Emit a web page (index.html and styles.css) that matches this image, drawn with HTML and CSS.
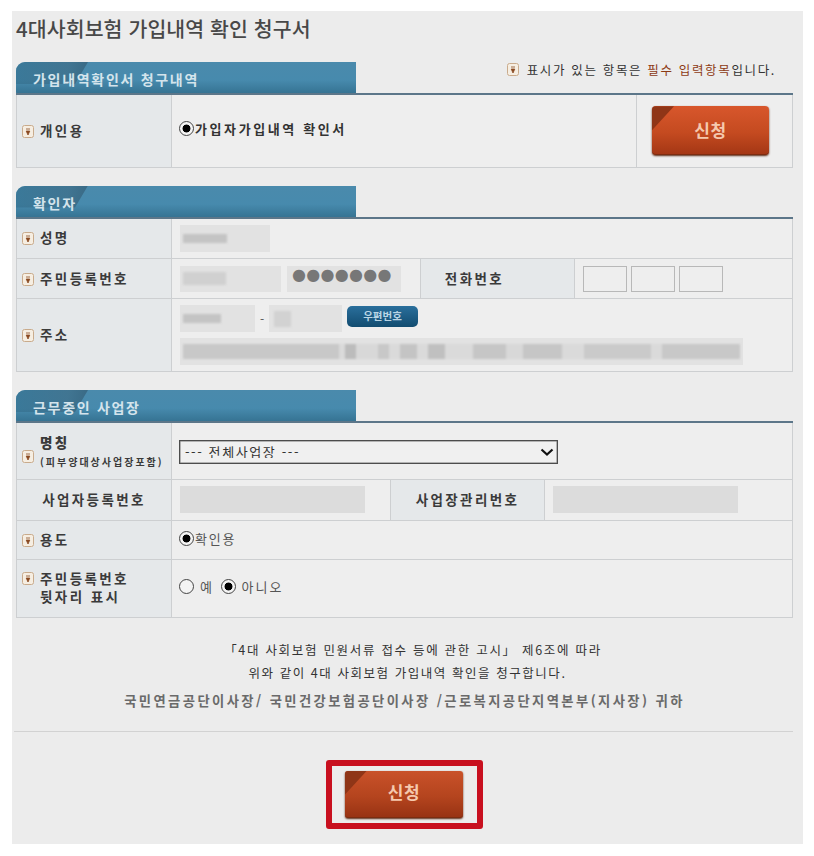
FILE: index.html
```html
<!DOCTYPE html>
<html lang="ko">
<head>
<meta charset="utf-8">
<title>4대사회보험 가입내역 확인 청구서</title>
<link rel="stylesheet" href="styles.css">
</head>
<body>
<svg class="defs" width="0" height="0" aria-hidden="true"><defs>
<symbol id="req" viewBox="0 0 12 13"><rect x=".5" y=".5" width="11" height="12" rx="2" fill="#f6eee2" stroke="#c9ab8c"/><path d="M4 4h4M4.2 6h3.6L6 10z" fill="#8a4a22" stroke="#8a4a22" stroke-width=".8"/></symbol>
</defs></svg>
<main class="panel">
  <h1 class="title">4대사회보험 가입내역 확인 청구서</h1>

  <div class="tab-row">
    <h2 class="tab">가입내역확인서 청구내역</h2>
    <p class="note"><svg class="req"><use href="#req"/></svg> 표시가 있는 항목은 <em>필수 입력항목</em>입니다.</p>
  </div>
  <table class="form form-a">
    <colgroup><col class="c-label"><col class="c-a2"><col></colgroup>
    <tr class="r-73">
      <th class="lead"><svg class="req"><use href="#req"/></svg>개인용</th>
      <td class="bold-val"><label class="choice"><input type="radio" checked>가입자가입내역 확인서</label></td>
      <td class="btn-cell"><button class="btn" type="button">신청</button></td>
    </tr>
  </table>

  <div class="tab-row"><h2 class="tab">확인자</h2></div>
  <table class="form form-b">
    <colgroup><col class="c-label"><col class="c-b2"><col class="c-label2"><col></colgroup>
    <tr class="r-41">
      <th class="lead"><svg class="req"><use href="#req"/></svg>성명</th>
      <td colspan="3"><span class="field f-name"><i class="blur b-name"></i></span></td>
    </tr>
    <tr class="r-40">
      <th class="lead"><svg class="req"><use href="#req"/></svg>주민등록번호</th>
      <td><div class="inline">
        <span class="field f-rrn1"><i class="blur b-rrn"></i></span>
        <span class="field f-rrn2"><span class="dots">●●●●●●●</span></span>
      </div></td>
      <th class="tel">전화번호</th>
      <td><div class="inline phones"><span class="box"></span><span class="box"></span><span class="box"></span></div></td>
    </tr>
    <tr class="r-73">
      <th class="lead"><svg class="req"><use href="#req"/></svg>주소</th>
      <td colspan="3">
        <div class="inline zip">
          <span class="field f-zip1"><i class="blur b-zip"></i></span>
          <span class="dash">-</span>
          <span class="field f-zip2"><i class="blur b-zip2"></i></span>
          <button class="zip-btn" type="button">우편번호</button>
        </div>
        <span class="field f-addr"><i class="blur b-addr"></i></span>
      </td>
    </tr>
  </table>

  <div class="tab-row"><h2 class="tab">근무중인 사업장</h2></div>
  <table class="form form-c">
    <colgroup><col class="c-label"><col class="c-c2"><col class="c-label2"><col></colgroup>
    <tr class="r-57">
      <th class="lead name-cell"><svg class="req"><use href="#req"/></svg><span class="name-text"><b>명칭</b><small>(피부양대상사업장포함)</small></span></th>
      <td colspan="3" class="select-cell"><select class="select"><option>--- 전체사업장 ---</option></select></td>
    </tr>
    <tr class="r-41">
      <th>사업자등록번호</th>
      <td><span class="field f-biz"></span></td>
      <th>사업장관리번호</th>
      <td><span class="field f-biz"></span></td>
    </tr>
    <tr class="r-39">
      <th class="lead"><svg class="req"><use href="#req"/></svg>용도</th>
      <td colspan="3"><label class="choice"><input type="radio" checked>확인용</label></td>
    </tr>
    <tr class="r-58">
      <th class="lead two-line"><svg class="req"><use href="#req"/></svg><span>주민등록번호<br>뒷자리 표시</span></th>
      <td colspan="3" class="yn">
        <label class="choice"><input type="radio" name="yn"><span>예</span></label>
        <label class="choice"><input type="radio" name="yn" checked><span>아니오</span></label>
      </td>
    </tr>
  </table>

  <div class="notice">
    <p class="l1">「4대 사회보험 민원서류 접수 등에 관한 고시」 제6조에 따라</p>
    <p class="l2">위와 같이 4대 사회보험 가입내역 확인을 청구합니다.</p>
    <p class="to">국민연금공단이사장/ 국민건강보험공단이사장 /근로복지공단지역본부(지사장) 귀하</p>
  </div>
  <hr class="rule">
  <div class="submit">
    <div class="frame"><button class="btn btn-b" type="button">신청</button></div>
  </div>
</main>
</body>
</html>
```

FILE: styles.css
```css
* { box-sizing: border-box; }
html, body { margin: 0; padding: 0; background: #fff; }
body { font-family: "Noto Sans CJK KR", "Noto Sans", sans-serif; color: #333; }
.defs { position: absolute; }
.panel { width: 791px; height: 833px; margin: 11px 0 0 12px; padding: 0 10px 0 4px; background: #ececec; }
.title { margin: 0; height: 51px; font-size: 20.5px; line-height: 34px; font-weight: 500; color: #484848; letter-spacing: .1px; }

.tab-row { display: flex; justify-content: space-between; align-items: flex-start; height: 33px; }
.tab {
  position: relative; z-index: 0; overflow: hidden; width: 340px; height: 33px; margin: 0; padding: 0 0 0 17px;
  border-radius: 9px 0 0 3px;
  background: linear-gradient(180deg, #4a8aac 0%, #478aad 55%, #33708f 100%);
  color: #d4e4ec; font-size: 14px; line-height: 35px; font-weight: 700; letter-spacing: 1.7px; white-space: nowrap;
}
.tab::before {
  content: ""; position: absolute; z-index: -1; left: 0; top: 0; width: 72px; height: 22px;
  background: linear-gradient(100deg, #33708f 0%, #3c6a84 70%, #2f566d 100%);
  clip-path: polygon(0 0, 100% 0, 82% 100%, 0 100%);
  opacity: .65;
}
.note { margin: -1px 0 0; padding: 0 17px 0 0; font-size: 12.5px; line-height: 17px; letter-spacing: 1.65px; color: #333; display: flex; align-items: center; white-space: pre; }
.note em { font-style: normal; color: #8c3a14; }
.note .req { margin-right: 3px; }

.form { width: 777px; table-layout: fixed; border-collapse: collapse; margin-bottom: 18px; background: #eeeeee; }
.form { border-top: 2px solid #5c7689; border-left: 1px solid #c6c8ca; border-right: 1px solid #c6c8ca; border-bottom: 1px solid #c6c8ca; margin-top: -2px; position: relative; }
.form th, .form td { border: 1px solid #cdcfd1; padding: 0; vertical-align: middle; }
.form tr:first-child th, .form tr:first-child td { border-top: 0; }
.form th { background: #e5e8ea; font-size: 13.5px; font-weight: 700; color: #3a3a3a; letter-spacing: 2.4px; text-align: center; line-height: 18px; padding-bottom: 2px; }
.form th.lead { text-align: left; padding-left: 5px; }
.form th.tel { padding-right: 46px; }
.form td { padding-left: 8px; font-size: 13px; }
.c-label { width: 155px; }
.c-label2 { width: 154px; }
.c-a2 { width: 465px; }
.c-b2 { width: 249px; }
.c-c2 { width: 219px; }
.r-73 { height: 73px; }
.r-40 { height: 40px; }
.r-57 { height: 57px; }
.r-41 { height: 41px; }
.r-39 { height: 39px; }
.r-58 { height: 58px; }

.req { width: 12px; height: 13px; margin-right: 6px; vertical-align: -2px; }
.choice { display: inline-flex; align-items: center; margin-left: -1px; letter-spacing: 1.8px; color: #555; white-space: nowrap; }
.choice input {
  appearance: none; width: 15px; height: 15px; margin: 0 1px 0 0; border: 1.5px solid #444; border-radius: 50%;
  background: #f4f4f4; flex: none;
}
.choice input:checked { background: radial-gradient(circle, #000 0 3.6px, #f4f4f4 4.3px); }
.bold-val { position: relative; }
.bold-val .choice { font-weight: 700; color: #333; margin-top: -6px; letter-spacing: 2.6px; }
.btn-cell { padding-left: 15px !important; }

.btn {
  position: relative; overflow: hidden; display: block; width: 117px; height: 49px; padding: 0 0 2px; border: 0; border-radius: 4px;
  background: linear-gradient(180deg, #d8572c 0%, #c44a20 55%, #a33614 100%);
  box-shadow: 0 1px 2px #5c2a16, inset 0 -1px 0 #7c2c10;
  color: #f5c9ae; font: 700 17px/1 "Noto Sans CJK KR", sans-serif; letter-spacing: .5px;
}
.btn::before { content: ""; position: absolute; left: 0; top: 0; width: 22px; height: 24px; background: #8f3517; clip-path: polygon(0 0, 100% 0, 0 100%); }
.btn-b { width: 118px; height: 47px; border-radius: 3px; padding-bottom: 5px; background: linear-gradient(180deg, #c9522a 0%, #b4441e 55%, #973213 100%); }

.inline { display: flex; align-items: center; }
.field { display: flex; align-items: center; background: #e2e2e2; height: 27px; }
.blur { display: block; filter: blur(1.2px); background: #c4c4c4; height: 9px; }
.f-name { width: 90px; padding-left: 3px; }
.b-name { width: 44px; }
.f-rrn1 { width: 101px; padding-left: 3px; height: 26px; }
.b-rrn { width: 43px; height: 13px; background: #d0d0d0; }
.f-rrn2 { width: 114px; margin-left: 6px; height: 26px; padding: 0 0 8px 5px; font-size: 16px; color: #777; letter-spacing: .3px; font-family: "DejaVu Sans", sans-serif; }
.dots { display: block; line-height: 18px; }
.phones { gap: 4px; }
.box { width: 44px; height: 26px; border: 1px solid #b8b8b8; background: #eeeeee; }
.zip { margin-bottom: 6px; }
.f-zip1 { width: 75px; padding-left: 3px; }
.b-zip { width: 38px; }
.dash { width: 14px; text-align: center; font-size: 12px; color: #555; }
.f-zip2 { width: 73px; padding-left: 5px; }
.b-zip2 { width: 17px; height: 16px; background: #d2d2d2; }
.zip-btn {
  width: 71px; height: 21px; margin: 0 0 4px 5px; padding: 0; border: 0; border-radius: 5px;
  background: linear-gradient(180deg, #2a6f9c, #124c70);
  color: #b9d5e5; font: 700 10.5px/1 "Noto Sans CJK KR", sans-serif;
}
.f-addr { width: 563px; padding: 0 3px; }
.b-addr {
  width: 557px; height: 15px;
  background: linear-gradient(90deg, #c8c8c8 0 28%, #dadada 28% 29%, #bcbcbc 29% 31%, #d8d8d8 31% 35%, #c8c8c8 35% 37%, #dadada 37% 39%, #c4c4c4 39% 42%, #dadada 42% 44%, #c0c0c0 44% 47%, #dadada 47% 52%, #c6c6c6 52% 58%, #d8d8d8 58% 61%, #c6c6c6 61% 68%, #dadada 68% 72%, #cacaca 72% 84%, #dadada 84% 86%, #c8c8c8 86% 100%);
}
.f-biz { width: 185px; height: 27px; background: #dcdcdc; }
.select-cell { padding-top: 2px !important; }
.select {
  appearance: none; display: block; width: 379px; height: 24px; margin-left: -1px; padding: 0 0 0 5px; border: 1px solid #4c4c4c; border-radius: 0;
  background: #f0f0f0 url("data:image/svg+xml,%3Csvg xmlns='http://www.w3.org/2000/svg' width='14' height='8'%3E%3Cpath d='M1.5 1.5 7 6.5l5.5-5' fill='none' stroke='%23111' stroke-width='2.2'/%3E%3C/svg%3E") no-repeat right 3px center;
  color: #333; font: 13px/1 "Noto Sans CJK KR", sans-serif; letter-spacing: 1.6px; box-shadow: inset 0 0 0 .5px #777;
}
.form th.name-cell { padding-top: 2px; padding-bottom: 0; }
.name-text { display: inline-block; vertical-align: middle; }
.name-cell .req { vertical-align: -8px; margin-top: 14px; }
.name-text b { display: block; margin-top: -2px; }
.name-text small { display: block; font-size: 10px; line-height: 14px; letter-spacing: 2px; white-space: nowrap; margin-top: 4px; }
.two-line .req { vertical-align: top; margin-top: 3px; }
.two-line span { display: inline-block; vertical-align: top; }
.yn .choice { margin-right: 4px; }
.yn .choice span { margin-left: 5px; letter-spacing: 2px; }
.yn { padding-bottom: 2px !important; }

.notice { margin-top: 20px; text-align: center; font-size: 12.5px; color: #333; line-height: 23px; }
.notice p { margin: 0; }
.notice .l1 { letter-spacing: 1.7px; padding-left: 17px; }
.notice .l2 { letter-spacing: 1.55px; padding-left: 6px; }
.notice .to { margin-top: 5px; font-size: 13.3px; font-weight: 700; color: #6a6a6a; letter-spacing: 2.4px; white-space: nowrap; }
.rule { width: 779px; height: 1px; margin: 19px 0 0 -2px; border: 0; background: #d2d2d2; }
.submit { display: flex; justify-content: center; margin-top: 28px; }
.frame { border: 6px solid #c8101f; border-radius: 3px; padding: 5px 13px; width: 157px; height: 69px; background: #ececec; }
```
